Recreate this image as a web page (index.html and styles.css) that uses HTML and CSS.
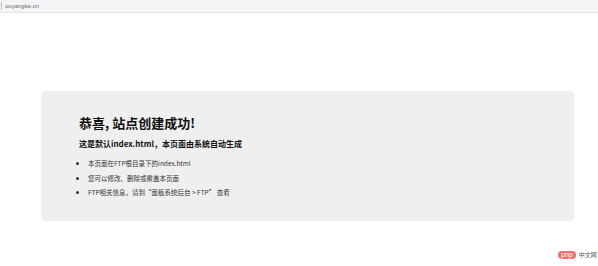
FILE: index.html
```html
<!DOCTYPE html>
<html lang="zh-CN">
<head>
    <meta charset="UTF-8">
    <meta name="viewport" content="width=device-width, initial-scale=1.0">
    <title>恭喜，站点创建成功！</title>
    <link rel="stylesheet" href="styles.css">
</head>
<body>

    <!-- Address bar -->
    <div class="topbar">
        <span class="url">ouyangke.cn</span>
    </div>

    <!-- Default page -->
    <div class="container">
        <h1>恭喜, 站点创建成功!</h1>
        <h3>这是默认index.html，本页面由系统自动生成</h3>
        <ul>
            <li>本页面在FTP根目录下的index.html</li>
            <li>您可以修改、删除或覆盖本页面</li>
            <li>FTP相关信息，请到“面板系统后台 &gt; FTP” 查看</li>
        </ul>
    </div>

    <!-- Watermark -->
    <div class="watermark">
        <span class="php">php</span>
        <span class="cn">中文网</span>
    </div>

</body>
</html>
```

FILE: styles.css
```css
/* General Styles */
body {
    font-family: 'Noto Sans CJK SC', 'Liberation Sans', sans-serif;
    margin: 0;
    padding: 0;
    background-color: #fff;
    color: #333;
}

/* Address bar */
.topbar {
    height: 12px;
    background-color: #f5f5f7;
    border-bottom: 1px solid #e2e2e2;
    display: flex;
    align-items: center;
    padding-left: 1px;
}

.url {
    border-left: 1px solid #bbb;
    padding-left: 3px;
    font-family: 'Liberation Sans', sans-serif;
    font-size: 6px;
    line-height: 8px;
    color: #666;
}

/* Default page */
.container {
    width: 533px;
    height: 130px;
    box-sizing: border-box;
    margin: 78px 0 0 41px;
    padding: 23px 38px;
    background-color: #efefef;
    border-radius: 4px;
}

h1 {
    margin: 0;
    font-size: 13px;
    line-height: 18px;
    font-weight: bold;
    color: #111;
}

h3 {
    margin: 6px 0 0;
    font-size: 8px;
    line-height: 11px;
    font-weight: bold;
    color: #111;
}

ul {
    margin: 7px 0 0;
    padding-left: 9px;
}

li {
    font-size: 6.5px;
    line-height: 14.5px;
    color: #333;
}

/* Watermark */
.watermark {
    position: absolute;
    left: 558px;
    top: 250px;
    display: flex;
    align-items: center;
    gap: 3px;
}

.php {
    background-color: #f26d6d;
    color: #fff;
    font-family: 'Liberation Sans', sans-serif;
    font-size: 7px;
    line-height: 8px;
    padding: 0 3px;
    border-radius: 5px;
}

.cn {
    font-size: 6px;
    color: #555;
}
```
